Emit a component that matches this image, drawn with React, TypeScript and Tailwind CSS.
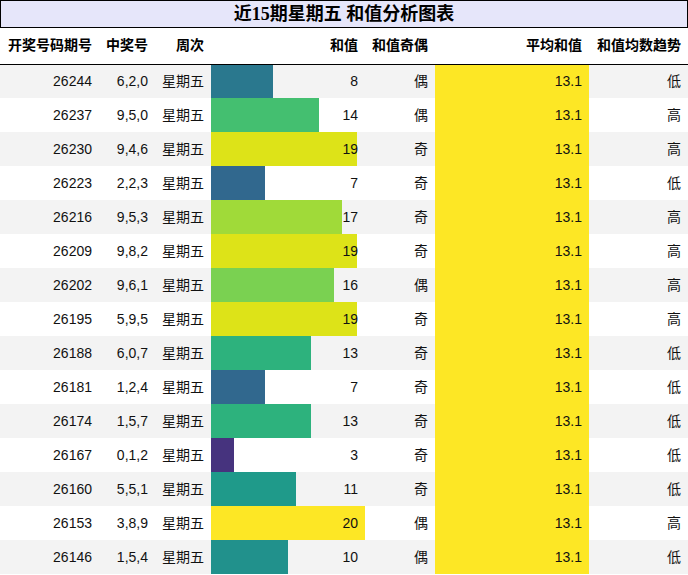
import React from 'react';

type Row = { issue: string; nums: string; sum: number; parity: string; trend: string };

const rows: Row[] = [
  { issue: '26244', nums: '6,2,0', sum: 8, parity: '偶', trend: '低' },
  { issue: '26237', nums: '9,5,0', sum: 14, parity: '偶', trend: '高' },
  { issue: '26230', nums: '9,4,6', sum: 19, parity: '奇', trend: '高' },
  { issue: '26223', nums: '2,2,3', sum: 7, parity: '奇', trend: '低' },
  { issue: '26216', nums: '9,5,3', sum: 17, parity: '奇', trend: '高' },
  { issue: '26209', nums: '9,8,2', sum: 19, parity: '奇', trend: '高' },
  { issue: '26202', nums: '9,6,1', sum: 16, parity: '偶', trend: '高' },
  { issue: '26195', nums: '5,9,5', sum: 19, parity: '奇', trend: '高' },
  { issue: '26188', nums: '6,0,7', sum: 13, parity: '奇', trend: '低' },
  { issue: '26181', nums: '1,2,4', sum: 7, parity: '奇', trend: '低' },
  { issue: '26174', nums: '1,5,7', sum: 13, parity: '奇', trend: '低' },
  { issue: '26167', nums: '0,1,2', sum: 3, parity: '奇', trend: '低' },
  { issue: '26160', nums: '5,5,1', sum: 11, parity: '奇', trend: '低' },
  { issue: '26153', nums: '3,8,9', sum: 20, parity: '偶', trend: '高' },
  { issue: '26146', nums: '1,5,4', sum: 10, parity: '偶', trend: '低' },
];

// viridis samples for sums 0..20
const barColor: Record<number, string> = {
  3: '#46337e',
  7: '#31688e',
  8: '#2a788e',
  10: '#21918c',
  11: '#1f9a8a',
  13: '#2db27d',
  14: '#44bf70',
  16: '#7ad151',
  17: '#a0da39',
  19: '#dde318',
  20: '#fde725',
};

const headers = ['开奖号码期号', '中奖号', '周次', '和值', '和值奇偶', '平均和值', '和值均数趋势'];

export default function App() {
  return (
    <div className="w-[688px] bg-white text-[#111] font-['Liberation_Sans','Noto_Sans_CJK_SC',sans-serif] text-[14px]">
      <div className="h-[28px] border border-black bg-[#e6e6fa] flex items-center justify-center font-bold text-[18px] font-['Liberation_Serif','Noto_Sans_CJK_SC',serif] text-black">
        近15期星期五 和值分析图表
      </div>
      <table className="w-[688px] table-fixed border-collapse">
        <colgroup>
          <col className="w-[99px]" />
          <col className="w-[56px]" />
          <col className="w-[56px]" />
          <col className="w-[154px]" />
          <col className="w-[70px]" />
          <col className="w-[154px]" />
          <col className="w-[99px]" />
        </colgroup>
        <thead>
          <tr className="h-[36px] border-b border-black">
            {headers.map((h) => (
              <th key={h} className="px-[7px] text-right font-bold text-black whitespace-nowrap">
                {h}
              </th>
            ))}
          </tr>
        </thead>
        <tbody>
          {rows.map((r, i) => {
            const pct = (r.sum / 20) * 100;
            const c = barColor[r.sum];
            return (
              <tr key={r.issue} className={`h-[34px] ${i % 2 === 0 ? 'bg-[#f3f3f3]' : 'bg-white'}`}>
                <td className="px-[7px] text-right">{r.issue}</td>
                <td className="px-[7px] text-right">{r.nums}</td>
                <td className="px-[7px] text-right whitespace-nowrap">星期五</td>
                <td
                  className="px-[7px] text-right"
                  style={{ background: `linear-gradient(90deg, ${c} ${pct}%, transparent ${pct}%)` }}
                >
                  {r.sum}
                </td>
                <td className="px-[7px] text-right">{r.parity}</td>
                <td className="px-[7px] text-right bg-[#fde725]">13.1</td>
                <td className="px-[7px] text-right">{r.trend}</td>
              </tr>
            );
          })}
        </tbody>
      </table>
    </div>
  );
}
